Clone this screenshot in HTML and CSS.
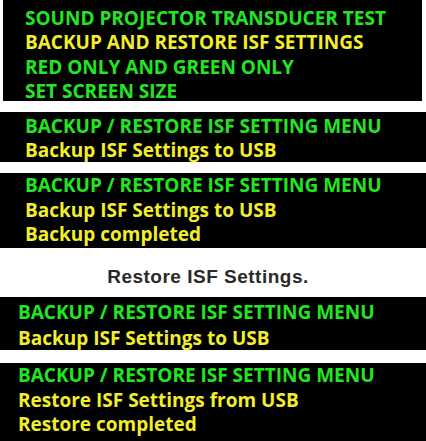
FILE: index.html
```html
<!DOCTYPE html>
<html lang="en">
<head>
    <meta charset="UTF-8">
    <meta name="viewport" content="width=device-width, initial-scale=1.0">
    <title>ISF Settings Backup / Restore</title>
    <link rel="stylesheet" href="styles.css">
</head>
<body>
    <div class="osd osd-main">
        <div class="green">SOUND PROJECTOR TRANSDUCER TEST</div>
        <div class="yellow">BACKUP AND RESTORE ISF SETTINGS</div>
        <div class="green">RED ONLY AND GREEN ONLY</div>
        <div class="green">SET SCREEN SIZE</div>
    </div>

    <div class="osd osd-backup">
        <div class="green">BACKUP / RESTORE ISF SETTING MENU</div>
        <div class="yellow">Backup ISF Settings to USB</div>
    </div>

    <div class="osd osd-backup-done">
        <div class="green">BACKUP / RESTORE ISF SETTING MENU</div>
        <div class="yellow">Backup ISF Settings to USB</div>
        <div class="yellow">Backup completed</div>
    </div>

    <h2 class="caption">Restore ISF Settings.</h2>

    <div class="osd osd-restore">
        <div class="green">BACKUP / RESTORE ISF SETTING MENU</div>
        <div class="yellow">Backup ISF Settings to USB</div>
    </div>

    <div class="osd osd-restore-done">
        <div class="green">BACKUP / RESTORE ISF SETTING MENU</div>
        <div class="yellow">Restore ISF Settings from USB</div>
        <div class="yellow">Restore completed</div>
    </div>
</body>
</html>
```

FILE: styles.css
```css
body {
    margin: 0;
    background-color: #ffffff;
    overflow: hidden;
}

.osd {
    background-color: #000000;
    font-family: "Open Sans", "DejaVu Sans", sans-serif;
    font-weight: bold;
    font-size: 19px;
    line-height: 24.3px;
    white-space: nowrap;
    box-sizing: border-box;
}

.green {
    color: #22e622;
}

.yellow {
    color: #f2ee2a;
}

.osd-main {
    margin: 0 4px 0 3px;
    height: 101px;
    padding: 6px 0 0 22px;
}

.osd-backup {
    margin-top: 11px;
    height: 50px;
    padding: 2px 0 0 25px;
    line-height: 24px;
}

.osd-backup-done {
    margin-top: 11px;
    height: 75px;
    padding: 0 0 0 25px;
    line-height: 24.5px;
}

.caption {
    margin: 0;
    height: 49px;
    box-sizing: border-box;
    padding: 19px 10px 0 0;
    text-align: center;
    font-family: "Liberation Sans", Arial, sans-serif;
    font-size: 19px;
    letter-spacing: 0.5px;
    line-height: 20px;
    color: #2a2a2a;
}

.osd-restore {
    height: 53px;
    padding: 3px 0 0 18px;
    line-height: 25.5px;
}

.osd-restore-done {
    margin-top: 13px;
    height: 78px;
    padding: 0 0 0 18px;
    line-height: 24.5px;
}
```
